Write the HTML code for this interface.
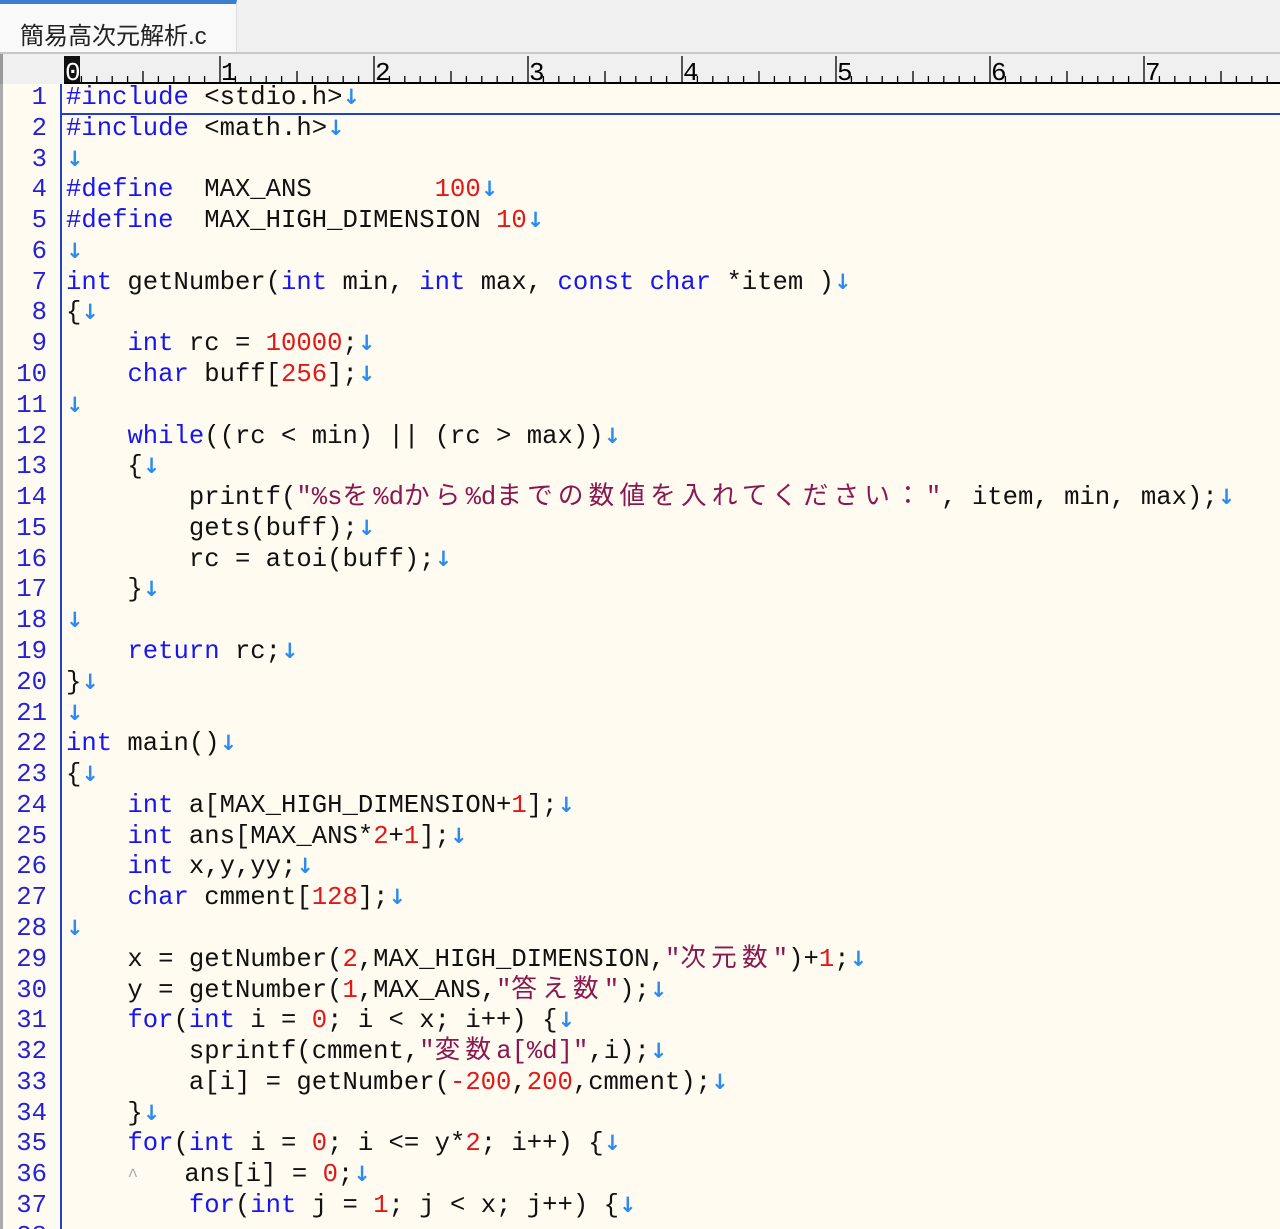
<!DOCTYPE html>
<html><head><meta charset="utf-8">
<style>
*{margin:0;padding:0;box-sizing:border-box}
html,body{width:1280px;height:1229px;overflow:hidden}
body{background:#fffbf0;position:relative;font-family:"Liberation Mono","Noto Sans CJK JP",monospace}
#tabbar{position:absolute;left:0;top:0;width:1280px;height:54px;background:#f0f0f0;border-bottom:2px solid #c8c8c8}
#tab{position:absolute;left:0;top:0;width:237px;height:52px;background:#f9f9f9;border-top:4px solid #3c7fd0;border-right:1px solid #ddd}
#tab span{position:absolute;left:20px;top:12px;font:24px "Liberation Sans","Noto Sans CJK JP",sans-serif;color:#222}
#ruler{position:absolute;left:0;top:54px;width:1280px;height:30px;background:#f0f0f0;border-left:3px solid #999}
#rbase{position:absolute;left:64px;top:82px;width:1216px;height:2px;background:#000}
#lnbg{position:absolute;left:0;top:84px;width:60px;height:1145px;background:#fffbf0;border-left:3px solid #aaa}
#gut{position:absolute;left:60px;top:84px;width:2px;height:1145px;background:#2040d0}
.ln{position:absolute;left:0;width:47px;text-align:right;font-size:25.6px;line-height:31px;color:#2323d6}
.l{position:absolute;left:66px;font-size:25.6px;line-height:31px;white-space:pre;color:#111}
.k{color:#1616f0}.n{color:#e01818}.s{color:#8a1850}
.j{letter-spacing:5.2px}
.a{color:#2a8cf0;font-size:21px;font-weight:bold;font-family:"DejaVu Sans",sans-serif}
.c{color:#aaa;font-size:18px}
#cur{position:absolute;left:62px;top:113px;width:1218px;height:2px;background:#2040d0}
</style></head><body>
<div id="tabbar"><div id="tab"><span>簡易高次元解析.c</span></div></div>
<div id="ruler"></div>
<div style="position:absolute;left:64px;top:56px;width:16px;height:28px;background:#111"></div>
<div id="rbase"></div>
<svg style="position:absolute;left:0;top:54px" width="1280" height="30">
<g stroke="#000" stroke-width="1.3">
<path d="M81.4 28v-6M96.8 28v-6M112.2 28v-6M127.6 28v-6M143 28v-11M158.4 28v-6M173.8 28v-6M189.2 28v-6M204.6 28v-6M220 28v-26
M235.4 28v-6M250.8 28v-6M266.2 28v-6M281.6 28v-6M297 28v-11M312.4 28v-6M327.8 28v-6M343.2 28v-6M358.6 28v-6M374 28v-26
M389.4 28v-6M404.8 28v-6M420.2 28v-6M435.6 28v-6M451 28v-11M466.4 28v-6M481.8 28v-6M497.2 28v-6M512.6 28v-6M528 28v-26
M543.4 28v-6M558.8 28v-6M574.2 28v-6M589.6 28v-6M605 28v-11M620.4 28v-6M635.8 28v-6M651.2 28v-6M666.6 28v-6M682 28v-26
M697.4 28v-6M712.8 28v-6M728.2 28v-6M743.6 28v-6M759 28v-11M774.4 28v-6M789.8 28v-6M805.2 28v-6M820.6 28v-6M836 28v-26
M851.4 28v-6M866.8 28v-6M882.2 28v-6M897.6 28v-6M913 28v-11M928.4 28v-6M943.8 28v-6M959.2 28v-6M974.6 28v-6M990 28v-26
M1005.4 28v-6M1020.8 28v-6M1036.2 28v-6M1051.6 28v-6M1067 28v-11M1082.4 28v-6M1097.8 28v-6M1113.2 28v-6M1128.6 28v-6M1144 28v-26
M1159.4 28v-6M1174.8 28v-6M1190.2 28v-6M1205.6 28v-6M1221 28v-11M1236.4 28v-6M1251.8 28v-6M1267.2 28v-6"/>
</g>
<g font-family="Liberation Mono" font-size="26" fill="#000">
<text x="65" y="26" fill="#fff">0</text><text x="221" y="26">1</text><text x="375" y="26">2</text><text x="529" y="26">3</text><text x="683" y="26">4</text><text x="837" y="26">5</text><text x="991" y="26">6</text><text x="1145" y="26">7</text>
</g></svg>
<div id="lnbg"></div>
<div id="gut"></div>
<div id="cur"></div>

<div class="ln" style="top:82px">1</div><div class="l" style="top:82px"><span class="k">#include</span> &lt;stdio.h&gt;<span class="a">↓</span></div>
<div class="ln" style="top:113px">2</div><div class="l" style="top:113px"><span class="k">#include</span> &lt;math.h&gt;<span class="a">↓</span></div>
<div class="ln" style="top:144px">3</div><div class="l" style="top:144px"><span class="a">↓</span></div>
<div class="ln" style="top:174px">4</div><div class="l" style="top:174px"><span class="k">#define</span>  MAX_ANS        <span class="n">100</span><span class="a">↓</span></div>
<div class="ln" style="top:205px">5</div><div class="l" style="top:205px"><span class="k">#define</span>  MAX_HIGH_DIMENSION <span class="n">10</span><span class="a">↓</span></div>
<div class="ln" style="top:236px">6</div><div class="l" style="top:236px"><span class="a">↓</span></div>
<div class="ln" style="top:267px">7</div><div class="l" style="top:267px"><span class="k">int</span> getNumber(<span class="k">int</span> min, <span class="k">int</span> max, <span class="k">const</span> <span class="k">char</span> *item )<span class="a">↓</span></div>
<div class="ln" style="top:297px">8</div><div class="l" style="top:297px">{<span class="a">↓</span></div>
<div class="ln" style="top:328px">9</div><div class="l" style="top:328px">    <span class="k">int</span> rc = <span class="n">10000</span>;<span class="a">↓</span></div>
<div class="ln" style="top:359px">10</div><div class="l" style="top:359px">    <span class="k">char</span> buff[<span class="n">256</span>];<span class="a">↓</span></div>
<div class="ln" style="top:390px">11</div><div class="l" style="top:390px"><span class="a">↓</span></div>
<div class="ln" style="top:421px">12</div><div class="l" style="top:421px">    <span class="k">while</span>((rc &lt; min) || (rc &gt; max))<span class="a">↓</span></div>
<div class="ln" style="top:451px">13</div><div class="l" style="top:451px">    {<span class="a">↓</span></div>
<div class="ln" style="top:482px">14</div><div class="l" style="top:482px">        printf(<span class="s">"%s<span class="j">を</span>%d<span class="j">から</span>%d<span class="j">までの数値を入れてください：</span>"</span>, item, min, max);<span class="a">↓</span></div>
<div class="ln" style="top:513px">15</div><div class="l" style="top:513px">        gets(buff);<span class="a">↓</span></div>
<div class="ln" style="top:544px">16</div><div class="l" style="top:544px">        rc = atoi(buff);<span class="a">↓</span></div>
<div class="ln" style="top:574px">17</div><div class="l" style="top:574px">    }<span class="a">↓</span></div>
<div class="ln" style="top:605px">18</div><div class="l" style="top:605px"><span class="a">↓</span></div>
<div class="ln" style="top:636px">19</div><div class="l" style="top:636px">    <span class="k">return</span> rc;<span class="a">↓</span></div>
<div class="ln" style="top:667px">20</div><div class="l" style="top:667px">}<span class="a">↓</span></div>
<div class="ln" style="top:698px">21</div><div class="l" style="top:698px"><span class="a">↓</span></div>
<div class="ln" style="top:728px">22</div><div class="l" style="top:728px"><span class="k">int</span> main()<span class="a">↓</span></div>
<div class="ln" style="top:759px">23</div><div class="l" style="top:759px">{<span class="a">↓</span></div>
<div class="ln" style="top:790px">24</div><div class="l" style="top:790px">    <span class="k">int</span> a[MAX_HIGH_DIMENSION+<span class="n">1</span>];<span class="a">↓</span></div>
<div class="ln" style="top:821px">25</div><div class="l" style="top:821px">    <span class="k">int</span> ans[MAX_ANS*<span class="n">2</span>+<span class="n">1</span>];<span class="a">↓</span></div>
<div class="ln" style="top:851px">26</div><div class="l" style="top:851px">    <span class="k">int</span> x,y,yy;<span class="a">↓</span></div>
<div class="ln" style="top:882px">27</div><div class="l" style="top:882px">    <span class="k">char</span> cmment[<span class="n">128</span>];<span class="a">↓</span></div>
<div class="ln" style="top:913px">28</div><div class="l" style="top:913px"><span class="a">↓</span></div>
<div class="ln" style="top:944px">29</div><div class="l" style="top:944px">    x = getNumber(<span class="n">2</span>,MAX_HIGH_DIMENSION,<span class="s">"<span class="j">次元数</span>"</span>)+<span class="n">1</span>;<span class="a">↓</span></div>
<div class="ln" style="top:975px">30</div><div class="l" style="top:975px">    y = getNumber(<span class="n">1</span>,MAX_ANS,<span class="s">"<span class="j">答え数</span>"</span>);<span class="a">↓</span></div>
<div class="ln" style="top:1005px">31</div><div class="l" style="top:1005px">    <span class="k">for</span>(<span class="k">int</span> i = <span class="n">0</span>; i &lt; x; i++) {<span class="a">↓</span></div>
<div class="ln" style="top:1036px">32</div><div class="l" style="top:1036px">        sprintf(cmment,<span class="s">"<span class="j">変数</span>a[%d]"</span>,i);<span class="a">↓</span></div>
<div class="ln" style="top:1067px">33</div><div class="l" style="top:1067px">        a[i] = getNumber(<span class="n">-200</span>,<span class="n">200</span>,cmment);<span class="a">↓</span></div>
<div class="ln" style="top:1098px">34</div><div class="l" style="top:1098px">    }<span class="a">↓</span></div>
<div class="ln" style="top:1128px">35</div><div class="l" style="top:1128px">    <span class="k">for</span>(<span class="k">int</span> i = <span class="n">0</span>; i &lt;= y*<span class="n">2</span>; i++) {<span class="a">↓</span></div>
<div class="ln" style="top:1159px">36</div><div class="l" style="top:1159px">    <span class="c">^</span>   ans[i] = <span class="n">0</span>;<span class="a">↓</span></div>
<div class="ln" style="top:1190px">37</div><div class="l" style="top:1190px">        <span class="k">for</span>(<span class="k">int</span> j = <span class="n">1</span>; j &lt; x; j++) {<span class="a">↓</span></div>
<div class="ln" style="top:1221px">38</div><div class="l" style="top:1221px">        <span class="c">^</span>   </div>
</body></html>
